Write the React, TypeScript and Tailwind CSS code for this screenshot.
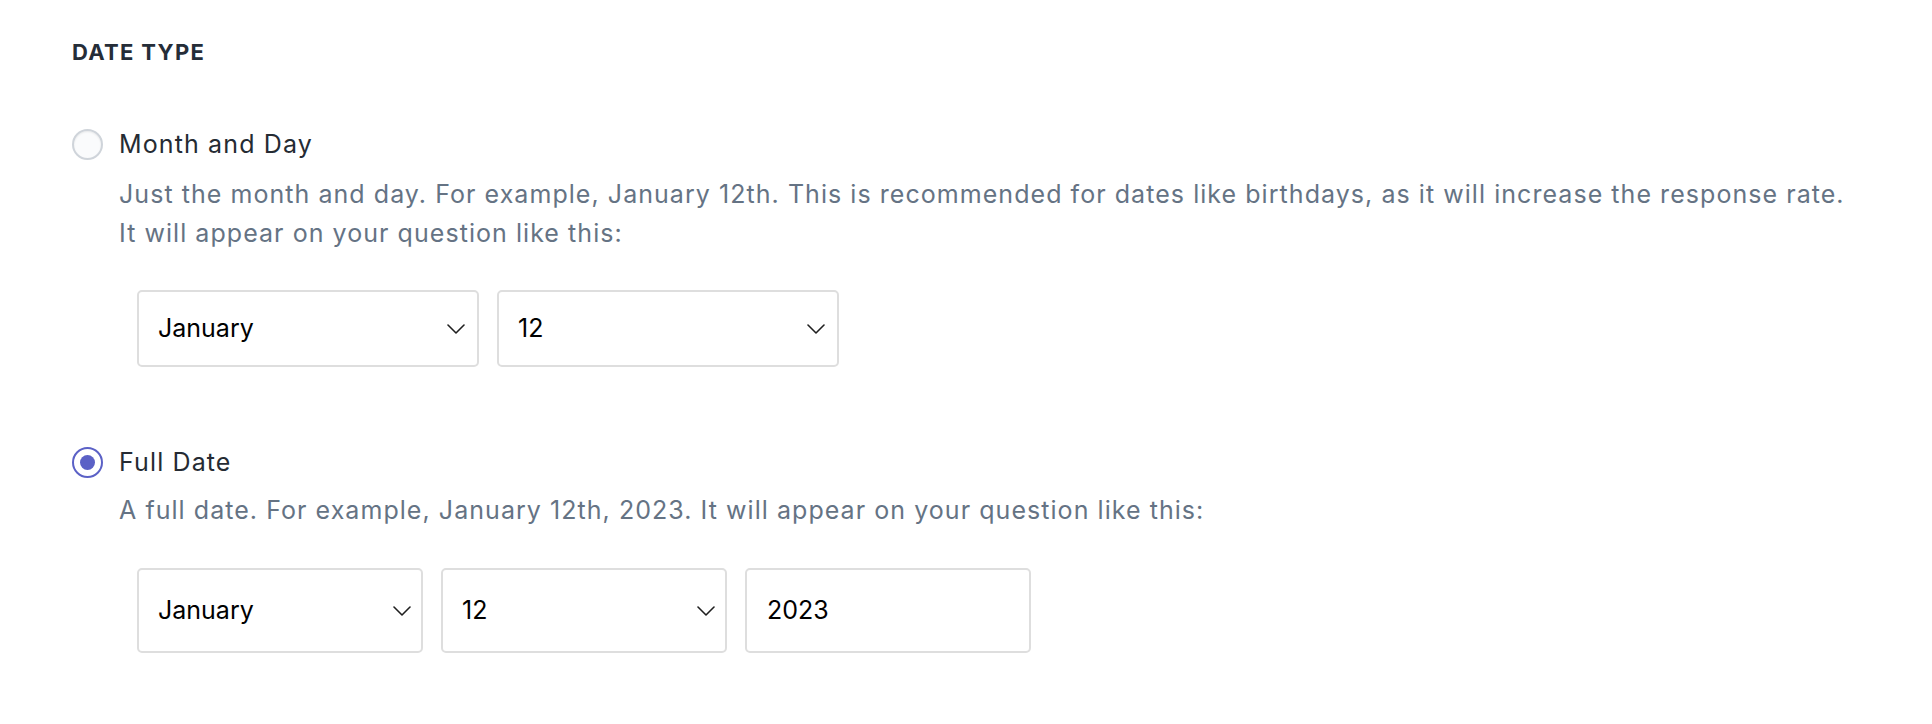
import React from "react";

function Chevron() {
  return (
    <svg width="18" height="10" viewBox="0 0 18 10" fill="none" className="shrink-0">
      <polyline points="1,1 9,9 17,1" stroke="#1f1f1f" strokeWidth="1.6" fill="none" strokeLinecap="round" strokeLinejoin="round" />
    </svg>
  );
}

function SelectBox({ value, width, height, pr }: { value: string; width: string; height: string; pr: string }) {
  return (
    <div
      className={`flex items-center justify-between rounded-[5px] border-2 border-[#dedede] bg-white pl-[19px] text-[25px] text-black ${pr} ${width} ${height}`}
    >
      <span>{value}</span>
      <Chevron />
    </div>
  );
}

export default function App() {
  return (
    <div className="min-h-[724px] w-full bg-white font-['Inter',sans-serif]">
      <div className="flex flex-col pl-[72px] pt-[38px]">
        <div className="text-[22px] font-bold leading-[28px] tracking-[0.06em] text-[#252d38]">DATE TYPE</div>

        <div className="mt-[62px] flex items-center gap-[16px]">
          <div className="h-[31px] w-[31px] rounded-full border-2 border-[#cfd4da] bg-[#fafbfc] shadow-[inset_0_1px_2px_rgba(0,0,0,0.08)]" />
          <div className="text-[25px] leading-[32px] tracking-[0.045em] text-[#252b33]">Month and Day</div>
        </div>
        <div className="ml-[47px] mt-[15px] text-[25px] leading-[39px] tracking-[0.042em] text-[#657384]">
          Just the month and day. For example, January 12th. This is recommended for dates like birthdays, as it will increase the response rate.
          <br />
          It will appear on your question like this:
        </div>
        <div className="ml-[65px] mt-[37px] flex gap-[18px]">
          <SelectBox value="January" width="w-[342px]" height="h-[77px]" pr="pr-[12px]" />
          <SelectBox value="12" width="w-[342px]" height="h-[77px]" pr="pr-[12px]" />
        </div>

        <div className="mt-[79px] flex items-center gap-[16px]">
          <div className="flex h-[31px] w-[31px] items-center justify-center rounded-full border-2 border-[#5b61c6] bg-white">
            <div className="h-[15px] w-[15px] rounded-full bg-[#5b61c6]" />
          </div>
          <div className="text-[25px] leading-[32px] tracking-[0.045em] text-[#252b33]">Full Date</div>
        </div>
        <div className="ml-[47px] mt-[13px] text-[25px] leading-[39px] tracking-[0.042em] text-[#657384]">
          A full date. For example, January 12th, 2023. It will appear on your question like this:
        </div>
        <div className="ml-[65px] mt-[38px] flex gap-[18px]">
          <SelectBox value="January" width="w-[286px]" height="h-[85px]" pr="pr-[10px]" />
          <SelectBox value="12" width="w-[286px]" height="h-[85px]" pr="pr-[10px]" />
          <div className="flex h-[85px] w-[286px] items-center rounded-[5px] border-2 border-[#dedede] bg-white pl-[20px] text-[25px] text-black">
            2023
          </div>
        </div>
      </div>
    </div>
  );
}
